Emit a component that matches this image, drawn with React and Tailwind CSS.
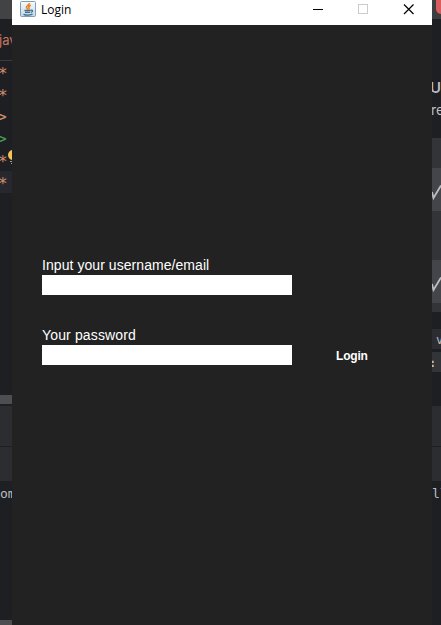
import React from "react";

function JavaIcon() {
  return (
    <svg className="h-4 w-4 shrink-0" viewBox="0 0 16 16" fill="none">
      <defs>
        <linearGradient id="tile" x1="0" y1="0" x2="0" y2="1">
          <stop offset="0" stopColor="#f7fafb" />
          <stop offset="1" stopColor="#c4d8e4" />
        </linearGradient>
      </defs>
      <rect x="0.5" y="0.5" width="15" height="15" rx="1" fill="url(#tile)" stroke="#7f9db4" />
      <path d="M9.500 2C9.500 4 6 4.700 6.500 6.300C6.800 7.200 7.600 7.500 7.600 8.500M10.800 4.200C9 5 8.200 5.800 9 6.700C9.500 7.400 9 8 8.600 8.500" stroke="#ee7f1c" strokeWidth="1.500" />
      <path d="M4.500 9.500H10.500M5 11.300H10M10.700 9.300C13.300 8.700 13 11 10.800 11.400M3.500 13.300C6 14.300 10 14.200 12.500 13.200" stroke="#3f6c8c" strokeWidth="1.300" />
    </svg>
  );
}

function TitleBar() {
  return (
    <header className="flex h-[25px] shrink-0 items-start bg-white pl-2">
      <div className="pt-px">
        <JavaIcon />
      </div>
      <span className="ml-[5px] mt-px font-['Open_Sans','Noto_Sans',sans-serif] text-[12px] leading-[18px] text-black">
        Login
      </span>
      <svg className="ml-auto mr-[17px] h-[18px] w-[104px]" viewBox="0 0 104 18" fill="none" shapeRendering="crispEdges">
        <path d="M2 9.500H12" stroke="#000" />
        <rect x="47.500" y="4.500" width="9" height="9" stroke="#ccc" />
        <path d="M93 4.500L102.500 14M102.500 4.500L93 14" stroke="#000" shapeRendering="auto" strokeWidth="1.200" />
      </svg>
    </header>
  );
}

function Field({ label, type, labelClass }) {
  return (
    <label className="flex w-[250px] flex-col">
      <span className={`h-5 whitespace-nowrap text-[14px] leading-5 text-white ${labelClass}`}>{label}</span>
      <input type={type} className="h-5 rounded-none bg-white px-1 text-[14px] text-black outline-none" />
    </label>
  );
}

function CodeRow({ text, className }) {
  return (
    <div className={`h-[22px] shrink-0 whitespace-nowrap text-[16px] ${className}`}>{text}</div>
  );
}

function LeftEditor() {
  return (
    <aside className="flex w-3 shrink-0 flex-col overflow-hidden bg-[#1e1f22] font-['DejaVu_Sans_Mono',monospace]">
      <div className="h-[19px] shrink-0 bg-[#414345]" />
      <div className="h-[41px] shrink-0 whitespace-nowrap font-['Inter',sans-serif] text-[13px] leading-[43px] text-[#c77563]">
        <span className="-ml-px">java</span>
      </div>
      <div className="h-px shrink-0 bg-[#393b40]" />
      <CodeRow text="*" className="-ml-0.5 leading-[25px] text-[#cf8e6d]" />
      <CodeRow text="*" className="-ml-0.5 leading-[25px] text-[#cf8e6d]" />
      <CodeRow text="&gt;" className="-ml-[3px] leading-6 text-[#cf8e6d]" />
      <CodeRow text="&gt;" className="-ml-[3px] leading-6 text-[#499c54]" />
      <div className="relative h-[22px] shrink-0">
        <CodeRow text="*" className="-ml-0.5 leading-[25px] text-[#cf8e6d]" />
        <svg className="absolute left-2 top-0 h-4 w-1" viewBox="0 0 4 16">
          <circle cx="5" cy="6" r="5" fill="#f2c55c" />
          <path d="M2 12.500H4M3 14.500H4" stroke="#9da0a8" />
        </svg>
      </div>
      <div className="h-[22px] shrink-0 bg-[#26282e]">
        <CodeRow text="*" className="-ml-0.5 leading-[25px] text-[#cf8e6d]" />
      </div>
      <div className="h-[202px] shrink-0" />
      <div className="h-[9px] shrink-0 bg-[#4d4e50]" />
      <div className="h-0.5 shrink-0" />
      <div className="h-10 shrink-0 bg-[#2b2d30]" />
      <div className="h-px shrink-0" />
      <div className="h-[34px] shrink-0 bg-[#2b2d30]" />
      <div className="h-[26px] shrink-0 whitespace-nowrap text-[13px] leading-[25px] text-[#bcbec4]">om</div>
      <div className="flex-1" />
      <div className="h-[5px] shrink-0 bg-[#4d4e50]" />
    </aside>
  );
}

function CheckStroke() {
  return (
    <svg className="h-[43px] w-[9px]" viewBox="0 0 9 43" fill="none">
      <path d="M0 24L1.500 30L9 17.500" stroke="#bcbec4" strokeWidth="1.800" />
    </svg>
  );
}

function RightEditor() {
  return (
    <aside className="flex w-[9px] shrink-0 flex-col overflow-hidden bg-[#1e1f22] font-['Inter',sans-serif] text-[#bcbec4]">
      <div className="h-[19px] shrink-0 bg-[#3c3f41] pl-1">
        <div className="h-[14px] w-[5px] rounded-bl-md bg-[#db5c5c]" />
      </div>
      <div className="h-[57px] shrink-0" />
      <div className="h-6 shrink-0 whitespace-nowrap text-[15px] font-semibold leading-6">
        <span className="-ml-[2px]">U</span>
      </div>
      <div className="h-[38px] shrink-0 whitespace-nowrap text-[14px] leading-5">
        <span className="-ml-px">re</span>
      </div>
      <div className="h-[30px] shrink-0 bg-[#323438]" />
      <div className="h-[43px] shrink-0 bg-[#43454a]">
        <CheckStroke />
      </div>
      <div className="h-[49px] shrink-0 bg-[#323438]" />
      <div className="h-[43px] shrink-0 bg-[#43454a]">
        <CheckStroke />
      </div>
      <div className="h-[9px] shrink-0 bg-[#323438]" />
      <div className="h-[17px] shrink-0" />
      <div className="h-5 shrink-0 whitespace-nowrap bg-[#2b2d30] pl-1 font-['DejaVu_Sans_Mono',monospace] text-[12px] leading-[23px]">v</div>
      <div className="h-[3px] shrink-0" />
      <div className="h-5 shrink-0 whitespace-nowrap bg-[#323438] font-['DejaVu_Sans_Mono',monospace] text-[12px] font-bold leading-[22px]">
        <span className="-ml-[3px]">:</span>
      </div>
      <div className="h-[34px] shrink-0" />
      <div className="h-10 shrink-0 bg-[#2b2d30]" />
      <div className="h-px shrink-0" />
      <div className="h-[34px] shrink-0 bg-[#2b2d30]" />
      <div className="h-[26px] shrink-0 whitespace-nowrap font-['DejaVu_Sans_Mono',monospace] text-[13px] leading-[25px]">ll</div>
    </aside>
  );
}

export default function App() {
  return (
    <div className="flex h-[625px] w-[441px] overflow-hidden bg-[#1e1f22]">
      <LeftEditor />
      <main className="flex w-[420px] shrink-0 flex-col bg-[#222222] font-['Liberation_Sans',Arial,sans-serif]">
        <TitleBar />
        <form className="flex items-end gap-[44px] pl-[30px] pt-[230px]">
          <div className="flex flex-col gap-[30px]">
            <Field label="Input your username/email" type="text" labelClass="tracking-[0.06px]" />
            <Field label="Your password" type="password" labelClass="tracking-[0.15px]" />
          </div>
          <button type="button" className="h-5 text-[12px] font-bold leading-[22px] tracking-[-0.2px] text-white">
            Login
          </button>
        </form>
      </main>
      <RightEditor />
    </div>
  );
}
